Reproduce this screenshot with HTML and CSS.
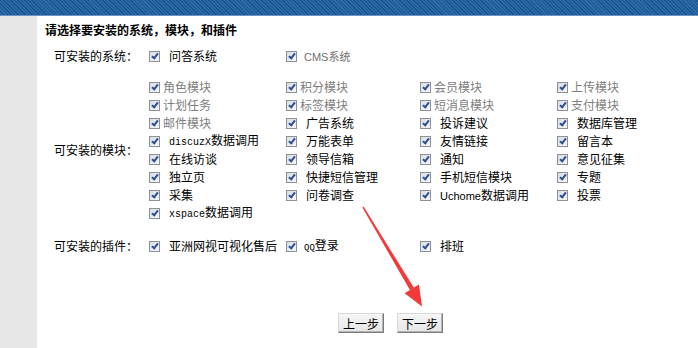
FILE: index.html
```html
<!DOCTYPE html>
<html lang="zh-CN">
<head>
<meta charset="utf-8">
<title>安装</title>
<link rel="stylesheet" href="styles.css">
</head>
<body>
<div class="topbar"></div>
<div class="page">
  <aside class="side"></aside>
  <main class="content">
    <h1 class="title">请选择要安装的系统，模块，和插件</h1>

    <section class="group">
      <div class="label">可安装的系统：</div>
      <div class="opts">
        <label class="opt"><span class="cb"></span><span>问答系统</span></label>
        <label class="opt small"><span class="cb"></span><span>CMS系统</span></label>
      </div>
    </section>

    <section class="group modules">
      <div class="label">可安装的模块：</div>
      <div class="opts">
        <label class="opt dis"><span class="cb"></span><span>角色模块</span></label>
        <label class="opt dis"><span class="cb"></span><span>积分模块</span></label>
        <label class="opt dis"><span class="cb"></span><span>会员模块</span></label>
        <label class="opt dis"><span class="cb"></span><span>上传模块</span></label>

        <label class="opt dis"><span class="cb"></span><span>计划任务</span></label>
        <label class="opt dis"><span class="cb"></span><span>标签模块</span></label>
        <label class="opt dis"><span class="cb"></span><span>短消息模块</span></label>
        <label class="opt dis"><span class="cb"></span><span>支付模块</span></label>

        <label class="opt dis"><span class="cb"></span><span>邮件模块</span></label>
        <label class="opt"><span class="cb"></span><span>广告系统</span></label>
        <label class="opt"><span class="cb"></span><span>投诉建议</span></label>
        <label class="opt"><span class="cb"></span><span>数据库管理</span></label>

        <label class="opt"><span class="cb"></span><span><span class="mono">discuzX</span>数据调用</span></label>
        <label class="opt"><span class="cb"></span><span>万能表单</span></label>
        <label class="opt"><span class="cb"></span><span>友情链接</span></label>
        <label class="opt"><span class="cb"></span><span>留言本</span></label>

        <label class="opt"><span class="cb"></span><span>在线访谈</span></label>
        <label class="opt"><span class="cb"></span><span>领导信箱</span></label>
        <label class="opt"><span class="cb"></span><span>通知</span></label>
        <label class="opt"><span class="cb"></span><span>意见征集</span></label>

        <label class="opt"><span class="cb"></span><span>独立页</span></label>
        <label class="opt"><span class="cb"></span><span>快捷短信管理</span></label>
        <label class="opt"><span class="cb"></span><span>手机短信模块</span></label>
        <label class="opt"><span class="cb"></span><span>专题</span></label>

        <label class="opt"><span class="cb"></span><span>采集</span></label>
        <label class="opt"><span class="cb"></span><span>问卷调查</span></label>
        <label class="opt"><span class="cb"></span><span><span class="mono narrow">Uchome</span>数据调用</span></label>
        <label class="opt"><span class="cb"></span><span>投票</span></label>

        <label class="opt"><span class="cb"></span><span><span class="mono">xspace</span>数据调用</span></label>
      </div>
    </section>

    <section class="group">
      <div class="label">可安装的插件：</div>
      <div class="opts">
        <label class="opt"><span class="cb"></span><span>亚洲网视可视化售后</span></label>
        <label class="opt qq"><span class="cb"></span><span><span class="mono qqs">QQ</span>登录</span></label>
        <label class="opt"><span class="cb"></span><span>排班</span></label>
      </div>
    </section>

    <div class="actions">
      <button class="btn" type="button">上一步</button>
      <button class="btn" type="button">下一步</button>
    </div>
  </main>
</div>

<svg class="arrow" width="698" height="348" viewBox="0 0 698 348" aria-hidden="true">
  <polygon points="362.4,207.4 363.6,206.6 413.8,287.6 419,284.4 422,306.5 404.6,293.2 409.9,290" fill="#f23a3a"/>
</svg>
</body>
</html>
```

FILE: styles.css
```css
html, body {
  margin: 0;
  padding: 0;
  background: #ffffff;
}

body {
  font-family: "Liberation Sans", "Noto Sans CJK SC", sans-serif;
  font-size: 12px;
  color: #000;
  position: relative;
  height: 348px;
  overflow: hidden;
}

.topbar {
  height: 15px;
  border-bottom: 1px solid #6d93c0;
  background: repeating-linear-gradient(45deg, #1a5590 0 1px, #2b69a7 1px 2.5px);
}

.page {
  display: flex;
  height: 332px;
}

.side {
  width: 37px;
  flex: none;
  background: #e7e7e7;
}

.content {
  flex: 1;
  display: flex;
  flex-direction: column;
}

.title {
  margin: 0;
  padding: 7px 0 0 8px;
  font-size: 12px;
  line-height: 16px;
  font-weight: bold;
  letter-spacing: 0;
}

.group {
  display: flex;
  align-items: center;
  padding-left: 17px;
  margin-top: 9px;
}

.group.modules {
  margin-top: 13px;
}

.group.modules + .group {
  margin-top: 15px;
}

.label {
  width: 95px;
  flex: none;
  line-height: 18px;
}

.opts {
  display: grid;
  grid-template-columns: 137px 134px 137px 120px;
  grid-auto-rows: 18px;
}

.opt {
  display: flex;
  align-items: center;
  gap: 9px;
  white-space: nowrap;
  line-height: 18px;
}

.opt.dis {
  gap: 3px;
  color: #7e7e7e;
}

.opt.small {
  gap: 7px;
  color: #707070;
  font-size: 11px;
}

.opt.qq {
  gap: 7px;
}

.cb {
  flex: none;
  width: 9px;
  height: 9px;
  border: 1px solid #8c9098;
  background: linear-gradient(135deg, #d9dde4, #f5f6f8);
  position: relative;
  margin-top: -1px;
}

.cb::after {
  content: "";
  position: absolute;
  left: 3px;
  top: 0;
  width: 2px;
  height: 5px;
  border: solid #2d4f96;
  border-width: 0 2px 2px 0;
  transform: rotate(38deg);
}

.mono {
  font-family: "Liberation Mono", monospace;
  font-size: 10px;
}

.mono.narrow {
  font-family: "Liberation Sans Narrow", "Liberation Sans", sans-serif;
  font-size: 11px;
}

.mono.qqs {
  font-size: 9px;
}

.actions {
  display: flex;
  gap: 13px;
  padding-left: 301px;
  margin-top: 57px;
}

.btn {
  width: 46px;
  height: 20px;
  padding: 0;
  font-family: "Liberation Sans", "Noto Sans CJK SC", sans-serif;
  font-size: 12px;
  color: #000;
  background: linear-gradient(#f6f6f6, #e6e6e6);
  border: 1px solid;
  border-color: #d8d8d8 #7a7a7a #7a7a7a #d8d8d8;
  box-shadow: inset -1px -1px 0 #b4b4b4;
  border-radius: 0;
}

.arrow {
  position: absolute;
  left: 0;
  top: 0;
  pointer-events: none;
}
```
